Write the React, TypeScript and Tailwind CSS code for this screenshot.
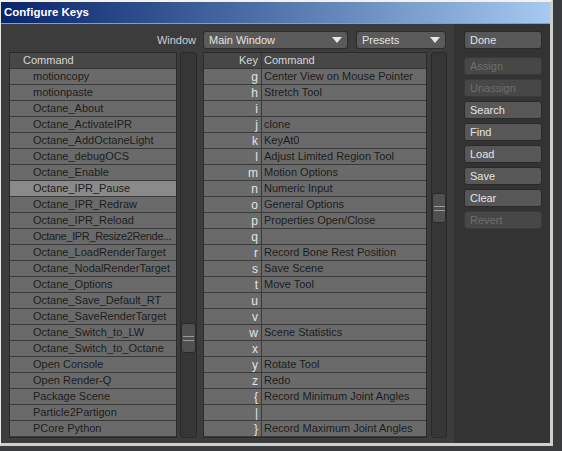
import React from 'react';

const commands = [
  'motioncopy',
  'motionpaste',
  'Octane_About',
  'Octane_ActivateIPR',
  'Octane_AddOctaneLight',
  'Octane_debugOCS',
  'Octane_Enable',
  'Octane_IPR_Pause',
  'Octane_IPR_Redraw',
  'Octane_IPR_Reload',
  'Octane_IPR_Resize2Rende...',
  'Octane_LoadRenderTarget',
  'Octane_NodalRenderTarget',
  'Octane_Options',
  'Octane_Save_Default_RT',
  'Octane_SaveRenderTarget',
  'Octane_Switch_to_LW',
  'Octane_Switch_to_Octane',
  'Open Console',
  'Open Render-Q',
  'Package Scene',
  'Particle2Partigon',
  'PCore Python',
];

const keys: [string, string][] = [
  ['g', 'Center View on Mouse Pointer'],
  ['h', 'Stretch Tool'],
  ['i', ''],
  ['j', 'clone'],
  ['k', 'KeyAt0'],
  ['l', 'Adjust Limited Region Tool'],
  ['m', 'Motion Options'],
  ['n', 'Numeric Input'],
  ['o', 'General Options'],
  ['p', 'Properties Open/Close'],
  ['q', ''],
  ['r', 'Record Bone Rest Position'],
  ['s', 'Save Scene'],
  ['t', 'Move Tool'],
  ['u', ''],
  ['v', ''],
  ['w', 'Scene Statistics'],
  ['x', ''],
  ['y', 'Rotate Tool'],
  ['z', 'Redo'],
  ['{', 'Record Minimum Joint Angles'],
  ['|', ''],
  ['}', 'Record Maximum Joint Angles'],
];

const buttons = [
  { label: 'Assign', disabled: true },
  { label: 'Unassign', disabled: true },
  { label: 'Search' },
  { label: 'Find' },
  { label: 'Load' },
  { label: 'Save' },
  { label: 'Clear' },
  { label: 'Revert', disabled: true },
];

function Arrow() {
  return (
    <svg width="10" height="6" viewBox="0 0 10 6" className="shrink-0">
      <path d="M0 0 L10 0 L5 6 Z" fill="#e8e8e8" />
    </svg>
  );
}

function Dropdown({ label, width }: { label: string; width: string }) {
  return (
    <div
      className={`${width} shrink-0 h-[18px] flex items-center justify-between pl-[5px] pr-[5px] bg-[#5a5a5a] border border-[#2c2c2c] rounded-[3px] text-[#e2e2e2]`}
    >
      <span>{label}</span>
      <Arrow />
    </div>
  );
}

function Scrollbar({ offset, width }: { offset: string; width: string }) {
  return (
    <div className={`${width} shrink-0 flex flex-col bg-[#363636] border border-[#292929] rounded-[3px]`}>
      <div
        className={`${offset} h-[30px] flex flex-col items-center justify-center gap-[3px] bg-[#505050] border border-[#2a2a2a] rounded-[3px]`}
      >
        <div className="w-[11px] h-px bg-[#9a9a9a]" />
        <div className="w-[11px] h-px bg-[#9a9a9a]" />
      </div>
    </div>
  );
}

export default function App() {
  return (
    <div className="w-[562px] h-[451px] bg-[#3a3b3d] overflow-hidden font-['Liberation_Sans',Arial,sans-serif] text-[11px] leading-none">
      <div className="w-[553px] h-[446px] flex flex-col border-t-2 border-t-[#f2f2f2] border-l border-l-[#e6e6e6] border-r-[3px] border-r-[#cfcfcf] border-b-[3px] border-b-[#cfcfcf]">
        {/* title bar */}
        <div className="h-[21px] shrink-0 flex items-center pl-[3px] bg-gradient-to-r from-[#0a246a] to-[#a6caf0] text-white font-bold text-[11.5px]">
          Configure Keys
        </div>
        <div className="h-px shrink-0 bg-[#9a9a9a]" />

        <div className="flex flex-1">
          {/* left area */}
          <div className="w-[453px] shrink-0 bg-[#3c3c3c] pl-2 pt-[7px]">
            <div className="w-[437px] h-[18px] flex items-center justify-end">
              <span className="text-[#cfcfcf] mr-[7px]">Window</span>
              <Dropdown label="Main Window" width="w-[145px]" />
              <div className="w-[8px] shrink-0" />
              <Dropdown label="Presets" width="w-[90px]" />
            </div>

            <div className="mt-[3px] flex h-[386px]">
              {/* command list */}
              <div className="w-[168px] shrink-0 border border-[#2a2a2a] bg-[#3a3a3a] flex flex-col">
                <div className="h-[16px] shrink-0 flex items-center pl-[13px] bg-[#474747] border-b border-[#353535] text-[#d6d6d6]">
                  Command
                </div>
                {commands.map((c, i) => (
                  <div
                    key={c}
                    className={`h-[16px] shrink-0 flex items-center pl-[23px] border-b border-[#3a3a3a] text-[#1c1c1c] whitespace-nowrap overflow-hidden ${
                      i === 7 ? 'bg-[#8a8a8a]' : 'bg-[#6a6a6a]'
                    } ${i === 10 ? 'tracking-[-0.35px]' : ''}`}
                  >
                    {c}
                  </div>
                ))}
              </div>

              <div className="w-[3px] shrink-0" />
              <Scrollbar width="w-[17px]" offset="mt-[270px]" />
              <div className="w-[6px] shrink-0" />

              {/* key list */}
              <div className="w-[224px] shrink-0 border border-[#2a2a2a] bg-[#3a3a3a] flex flex-col">
                <div className="h-[16px] shrink-0 flex bg-[#474747] border-b border-[#353535] text-[#d6d6d6]">
                  <div className="w-[58px] shrink-0 flex items-center justify-end pr-[3px] border-r border-[#353535]">
                    Key
                  </div>
                  <div className="flex-1 flex items-center pl-[2px]">Command</div>
                </div>
                {keys.map(([k, c]) => (
                  <div key={k} className="h-[16px] shrink-0 flex bg-[#6a6a6a] border-b border-[#3a3a3a]">
                    <div className="w-[58px] shrink-0 flex items-center justify-end pr-[3px] border-r border-[#3a3a3a] text-[#e4e4e4] text-[12px]">
                      {k}
                    </div>
                    <div className="flex-1 flex items-center pl-[2px] text-[#1c1c1c] whitespace-nowrap overflow-hidden">
                      {c}
                    </div>
                  </div>
                ))}
              </div>

              <div className="w-[4px] shrink-0" />
              <Scrollbar width="w-[16px]" offset="mt-[140px]" />
            </div>
          </div>

          {/* button column */}
          <div className="flex-1 bg-[#333333] pl-[10px] pt-[7px] flex flex-col">
            <div className="w-[78px] h-[18px] flex items-center pl-[5px] bg-[#575757] border border-[#2a2a2a] rounded-[3px] text-[#e4e4e4]">
              Done
            </div>
            <div className="mt-[8px] flex flex-col gap-[4px]">
              {buttons.map((b) => (
                <div
                  key={b.label}
                  className={`w-[78px] h-[18px] flex items-center pl-[5px] rounded-[3px] border ${
                    b.disabled
                      ? 'bg-[#474747] border-[#3a3a3a] text-[#6e6e6e]'
                      : 'bg-[#575757] border-[#2a2a2a] text-[#e4e4e4]'
                  }`}
                >
                  {b.label}
                </div>
              ))}
            </div>
          </div>
        </div>
      </div>
    </div>
  );
}
